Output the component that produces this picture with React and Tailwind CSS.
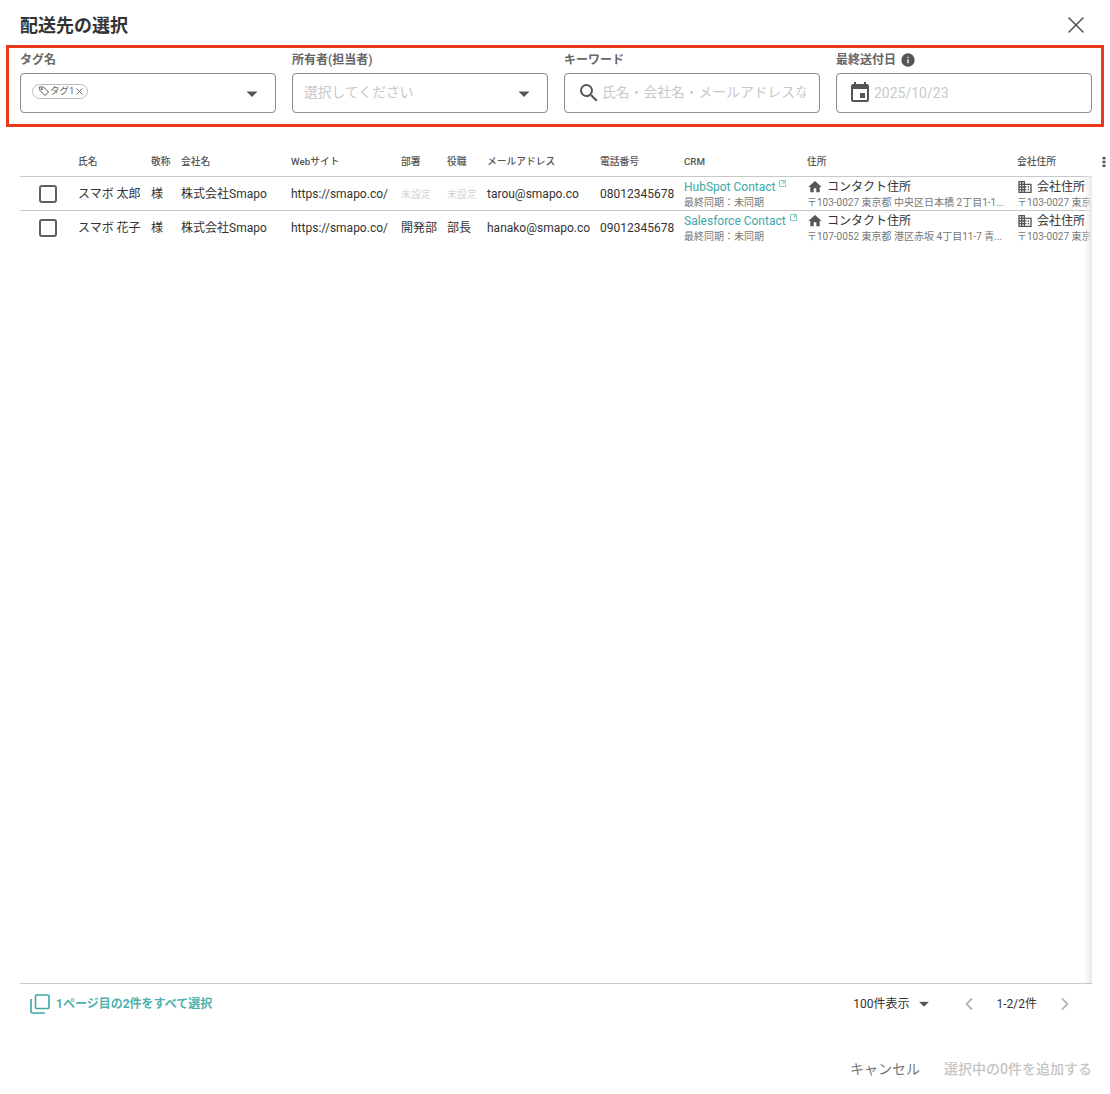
import { X } from "lucide-react";

const columns = [
  { label: "", w: "w-[58px]" },
  { label: "氏名", w: "w-[73px]" },
  { label: "敬称", w: "w-[30px]" },
  { label: "会社名", w: "w-[110px]" },
  { label: "Webサイト", w: "w-[110px]" },
  { label: "部署", w: "w-[46px]" },
  { label: "役職", w: "w-[40px]" },
  { label: "メールアドレス", w: "w-[113px]" },
  { label: "電話番号", w: "w-[84px]" },
  { label: "CRM", w: "w-[123px]" },
  { label: "住所", w: "w-[210px]" },
  { label: "会社住所", w: "w-[75px]" },
];

const rows = [
  {
    name: "スマボ 太郎",
    dept: "",
    role: "",
    mail: "tarou@smapo.co",
    tel: "08012345678",
    crm: "HubSpot Contact",
    addr: "〒103-0027 東京都 中央区日本橋 2丁目1-1...",
  },
  {
    name: "スマボ 花子",
    dept: "開発部",
    role: "部長",
    mail: "hanako@smapo.co",
    tel: "09012345678",
    crm: "Salesforce Contact",
    addr: "〒107-0052 東京都 港区赤坂 4丁目11-7 青...",
  },
];

function Caret({ className = "" }) {
  return (
    <svg width="12" height="6" viewBox="0 0 12 6" className={className}>
      <path d="M0.5 0.5h11L6 6z" fill="#555" />
    </svg>
  );
}

function Field({ label, extra, children }) {
  return (
    <div className="w-[256px] shrink-0">
      <div className="flex items-center h-[16px] text-[12px] font-semibold text-[#666]">
        {label}
        {extra}
      </div>
      <div className="mt-[5px] h-[40px] rounded-[4px] border border-[#8c8c8c] flex items-center relative">
        {children}
      </div>
    </div>
  );
}

function Unset() {
  return <span className="text-[10px] text-[#d4d4d4]">未設定</span>;
}

function HomeIcon() {
  return (
    <svg width="16" height="16" viewBox="0 0 24 24" fill="#555" className="shrink-0">
      <path d="M10 20v-6h4v6h5v-8h3L12 3 2 12h3v8z" />
    </svg>
  );
}

function BuildingIcon() {
  return (
    <svg width="16" height="16" viewBox="0 0 24 24" fill="#555" className="shrink-0">
      <path d="M12 7V3H2v18h20V7H12zM6 19H4v-2h2v2zm0-4H4v-2h2v2zm0-4H4V9h2v2zm0-4H4V5h2v2zm4 12H8v-2h2v2zm0-4H8v-2h2v2zm0-4H8V9h2v2zm0-4H8V5h2v2zm10 12h-8v-2h2v-2h-2v-2h2v-2h-2V9h8v10zm-2-8h-2v2h2v-2zm0 4h-2v2h2v-2z" />
    </svg>
  );
}

function ExternalIcon() {
  return (
    <svg width="7" height="7" viewBox="0 0 8 8" fill="none" stroke="#3aa9a5" strokeWidth="0.7" className="ml-[4px] mt-[-7px] shrink-0">
      <path d="M0.5 0.5h7v7h-7zM3.5 4.5L6 2M4.2 2H6v1.8" />
    </svg>
  );
}

function Row({ row }) {
  return (
    <div className="flex h-[34px] items-center border-t border-[#c8c8c8] text-[12px] text-[#333] whitespace-nowrap">
      <div className="w-[58px] shrink-0 pl-[19px]">
        <div className="w-[18px] h-[18px] rounded-[3px] border-2 border-[#5f5f5f]" />
      </div>
      <div className="w-[73px] shrink-0">{row.name}</div>
      <div className="w-[30px] shrink-0">様</div>
      <div className="w-[110px] shrink-0">株式会社Smapo</div>
      <div className="w-[110px] shrink-0">https://smapo.co/</div>
      <div className="w-[46px] shrink-0">{row.dept || <Unset />}</div>
      <div className="w-[40px] shrink-0">{row.role || <Unset />}</div>
      <div className="w-[113px] shrink-0">{row.mail}</div>
      <div className="w-[84px] shrink-0">{row.tel}</div>
      <div className="w-[123px] shrink-0 pt-[2px] leading-[16px]">
        <div className="flex items-center text-[#3aa9a5]">
          {row.crm}
          <ExternalIcon />
        </div>
        <div className="text-[10px] text-[#777]">最終同期：未同期</div>
      </div>
      <div className="w-[210px] shrink-0 pt-[2px] leading-[16px]">
        <div className="flex items-center gap-[4px]">
          <HomeIcon />
          コンタクト住所
        </div>
        <div className="text-[10px] text-[#777]">{row.addr}</div>
      </div>
      <div className="w-[75px] shrink-0 pt-[2px] overflow-hidden leading-[16px]">
        <div className="flex items-center gap-[4px]">
          <BuildingIcon />
          会社住所
        </div>
        <div className="text-[10px] text-[#777]">〒103-0027 東京都 中央区</div>
      </div>
    </div>
  );
}

export default function App() {
  return (
    <div className="w-[1110px] h-[1094px] bg-white overflow-hidden flex flex-col font-['Roboto','Noto_Sans_CJK_JP',sans-serif]">
      <div className="h-[45px] shrink-0 pt-[5px] pl-[20px] pr-[20px] flex items-center justify-between">
        <h2 className="text-[18px] font-bold text-[#333]">配送先の選択</h2>
        <X size={28} strokeWidth={1.3} color="#555" />
      </div>

      {/* 検索条件 */}
      <div className="ml-[6px] w-[1098px] h-[82px] shrink-0 border-[3px] border-[#e8391a] pl-[11px] pt-[4px] flex gap-[16px]">
        <Field label="タグ名">
          <span className="ml-[11px] mt-[-4px] h-[15px] pl-[5px] pr-[2px] rounded-full border border-[#bbb] flex items-center text-[9.5px] text-[#666]">
            <svg width="12" height="12" viewBox="0 0 24 24" fill="none" stroke="#555" strokeWidth="2">
              <path d="M3 4h8l10 10-7 7L4 11z" />
              <circle cx="8" cy="8" r="1" fill="#555" />
            </svg>
            タグ1
            <X size={11} strokeWidth={1.8} color="#555" />
          </span>
          <Caret className="absolute right-[17px] top-[17px]" />
        </Field>
        <Field label="所有者(担当者)">
          <span className="ml-[11px] mt-[-1px] text-[13.8px] text-[#c8c8c8]">選択してください</span>
          <Caret className="absolute right-[17px] top-[17px]" />
        </Field>
        <Field label="キーワード">
          <svg width="24" height="24" viewBox="0 0 24 24" fill="#555" className="ml-[12px] shrink-0">
            <path d="M15.5 14h-.79l-.28-.27A6.471 6.471 0 0016 9.5 6.5 6.5 0 109.5 16c1.61 0 3.09-.59 4.23-1.57l.27.28v.79l5 4.99L20.49 19l-4.99-5zm-6 0C7.01 14 5 11.99 5 9.5S7.01 5 9.5 5 14 7.01 14 9.5 11.99 14 9.5 14z" />
          </svg>
          <span className="ml-[1px] mt-[-1px] w-[204px] overflow-hidden whitespace-nowrap text-[13.8px] text-[#c8c8c8]">
            氏名・会社名・メールアドレスな
          </span>
        </Field>
        <Field
          label="最終送付日"
          extra={
            <svg width="16" height="16" viewBox="0 0 24 24" fill="#555" className="ml-[4px]">
              <path d="M12 2a10 10 0 100 20 10 10 0 000-20zm1 15h-2v-6h2v6zm0-8h-2V7h2v2z" />
            </svg>
          }
        >
          <svg width="24" height="24" viewBox="0 0 24 24" fill="#555" className="ml-[11px] shrink-0">
            <path d="M17 12h-5v5h5v-5zM16 1v2H8V1H6v2H5a2 2 0 00-2 2v14a2 2 0 002 2h14a2 2 0 002-2V5a2 2 0 00-2-2h-1V1h-2zm3 18H5V8h14v11z" />
          </svg>
          <span className="ml-[2px] text-[14px] text-[#c8c8c8]">2025/10/23</span>
        </Field>
      </div>

      {/* 一覧 */}
      <div className="ml-[20px] h-[857px] shrink-0 flex">
        <div className="w-[1072px] shrink-0 relative overflow-hidden border-b border-[#c8c8c8]">
          <div className="flex h-[49px] pb-[6px] items-end text-[9.75px] font-medium text-[#555] whitespace-nowrap">
            {columns.map((c, i) => (
              <div key={i} className={`${c.w} shrink-0`}>
                {c.label}
              </div>
            ))}
          </div>
          {rows.map((r) => (
            <Row key={r.name} row={r} />
          ))}
          <div className="absolute right-0 top-[49px] bottom-0 w-[8px] bg-gradient-to-r from-transparent to-[#e9e9e9]" />
        </div>
        <div className="pl-[10px] pt-[30px]">
          <svg width="4" height="10" viewBox="0 0 4 10" fill="#555">
            <rect x="0.5" y="0" width="3" height="2.4" />
            <rect x="0.5" y="3.8" width="3" height="2.4" />
            <rect x="0.5" y="7.6" width="3" height="2.4" />
          </svg>
        </div>
      </div>

      <div className="pl-[30px] pr-[40px] w-[1110px] h-[39px] shrink-0 flex items-center">
        <svg width="20" height="20" viewBox="0 0 20 20" fill="none" stroke="#3aa9a5" strokeWidth="1.6">
          <rect x="5.5" y="1" width="13.5" height="13.5" rx="1" />
          <path d="M1 5v13a1 1 0 001 1h13" />
        </svg>
        <span className="ml-[6px] mt-[1px] text-[12px] font-bold text-[#4db0ad]">1ページ目の2件をすべて選択</span>
        <span className="ml-auto text-[12px] text-[#333]">100件表示</span>
        <Caret className="ml-[9px] scale-90" />
        <svg width="10" height="14" viewBox="0 0 10 14" fill="none" stroke="#b5b5b5" strokeWidth="1.8" className="ml-[34px]">
          <path d="M8 1.5L2.5 7 8 12.5" />
        </svg>
        <span className="ml-[22px] text-[12px] text-[#333]">1-2/2件</span>
        <svg width="10" height="14" viewBox="0 0 10 14" fill="none" stroke="#b5b5b5" strokeWidth="1.8" className="ml-[23px]">
          <path d="M2 1.5L7.5 7 2 12.5" />
        </svg>
      </div>

      <div className="mt-[36px] pr-[18px] w-[1110px] flex justify-end gap-[24px] text-[14px] leading-[20px]">
        <span className="text-[#777]">キャンセル</span>
        <span className="font-medium text-[#c4c4c4]">選択中の0件を追加する</span>
      </div>
    </div>
  );
}
